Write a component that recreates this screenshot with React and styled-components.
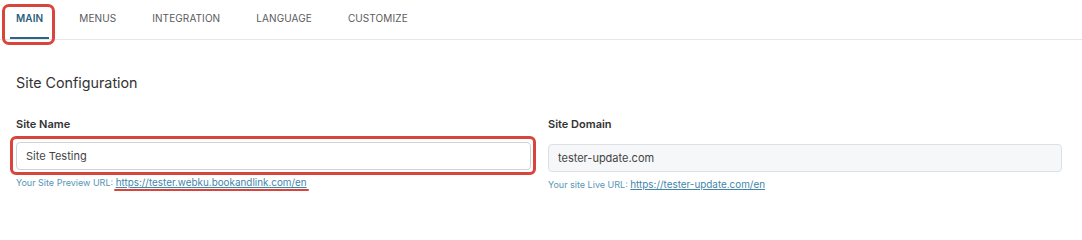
import React from 'react';
import styled, { createGlobalStyle } from 'styled-components';

const GlobalStyle = createGlobalStyle`
  body {
    margin: 0;
    background: #ffffff;
    font-family: Inter, "Open Sans", "Liberation Sans", sans-serif;
    color: #333333;
  }
`;

const annotationRed = '#d9453c';

const Page = styled.div`
  width: 1082px;
  height: 209px;
  background: #ffffff;
  overflow: hidden;
`;

const TabBar = styled.nav`
  display: flex;
  gap: 24px;
  height: 39px;
  padding-left: 10px;
  border-bottom: 1px solid #e6e6e6;
`;

const Tab = styled.div`
  position: relative;
  display: flex;
  align-items: center;
  box-sizing: border-box;
  height: 39px;
  padding: 0 6px 1px;
  font-size: 10px;
  font-weight: ${(p) => (p.$active ? 600 : 400)};
  letter-spacing: 0.1px;
  color: ${(p) => (p.$active ? '#2c5f7c' : '#5a5a5a')};
  border-bottom: 2px solid ${(p) => (p.$active ? '#2c6584' : 'transparent')};
  margin-bottom: -1px;

  ${(p) => p.$marked && `
    &::after {
      content: '';
      position: absolute;
      left: -8px;
      right: -6px;
      top: 4px;
      bottom: -8px;
      border: 3px solid ${annotationRed};
      border-radius: 7px;
    }
  `}
`;

const Content = styled.div`
  padding: 0 20px 0 16px;
`;

const SectionTitle = styled.h2`
  margin: 34px 0 0;
  font-size: 14.3px;
  font-weight: 400;
  line-height: 18px;
  color: #333333;
`;

const FieldGrid = styled.div`
  display: grid;
  grid-template-columns: 515px 514px;
  column-gap: 17px;
  margin-top: 25px;
`;

const Field = styled.div`
  display: flex;
  flex-direction: column;
`;

const Label = styled.label`
  font-size: 11px;
  font-weight: 600;
  line-height: 14px;
  color: #333333;
`;

const InputWrap = styled.div`
  position: relative;
  margin-top: ${(p) => p.$offset}px;

  ${(p) => p.$marked && `
    &::after {
      content: '';
      position: absolute;
      left: -6px;
      right: -5px;
      top: -6px;
      bottom: -5px;
      border: 3px solid ${annotationRed};
      border-radius: 6px;
      pointer-events: none;
    }
  `}
`;

const Input = styled.input`
  display: block;
  box-sizing: border-box;
  width: 100%;
  height: 28px;
  padding: 0 9px;
  font-family: inherit;
  font-size: 11px;
  color: #444444;
  background: ${(p) => (p.disabled ? '#f6f7f9' : '#ffffff')};
  border: 1px solid ${(p) => (p.disabled ? '#dcdfe3' : '#cfd3d8')};
  border-radius: 4px;
  outline: none;
`;

const Hint = styled.div`
  margin-top: ${(p) => p.$gap}px;
  font-size: 9px;
  line-height: 12px;
  color: #5596b5;
  white-space: nowrap;
`;

const HintLink = styled.a`
  position: relative;
  font-size: 9.9px;
  color: #3f86aa;
  text-decoration: underline;
  text-underline-offset: 1px;

  ${(p) => p.$marked && `
    &::after {
      content: '';
      position: absolute;
      left: -2px;
      right: -2px;
      bottom: -3px;
      height: 2px;
      background: ${annotationRed};
      border-radius: 1px;
    }
  `}
`;

const tabs = ['MAIN', 'MENUS', 'INTEGRATION', 'LANGUAGE', 'CUSTOMIZE'];

const App = () => (
  <Page>
    <GlobalStyle />
    <TabBar>
      {tabs.map((t) => (
        <Tab key={t} $active={t === 'MAIN'} $marked={t === 'MAIN'}>{t}</Tab>
      ))}
    </TabBar>
    <Content>
      <SectionTitle>Site Configuration</SectionTitle>
      <FieldGrid>
        <Field>
          <Label>Site Name</Label>
          <InputWrap $offset={11} $marked>
            <Input defaultValue="Site Testing" />
          </InputWrap>
          <Hint $gap={6}>
            Your Site Preview URL:
            {' '}
            <HintLink $marked>https://tester.webku.bookandlink.com/en</HintLink>
          </Hint>
        </Field>
        <Field>
          <Label>Site Domain</Label>
          <InputWrap $offset={13}>
            <Input defaultValue="tester-update.com" disabled />
          </InputWrap>
          <Hint $gap={6}>
            Your site Live URL:
            {' '}
            <HintLink>https://tester-update.com/en</HintLink>
          </Hint>
        </Field>
      </FieldGrid>
    </Content>
  </Page>
);

export default App;
